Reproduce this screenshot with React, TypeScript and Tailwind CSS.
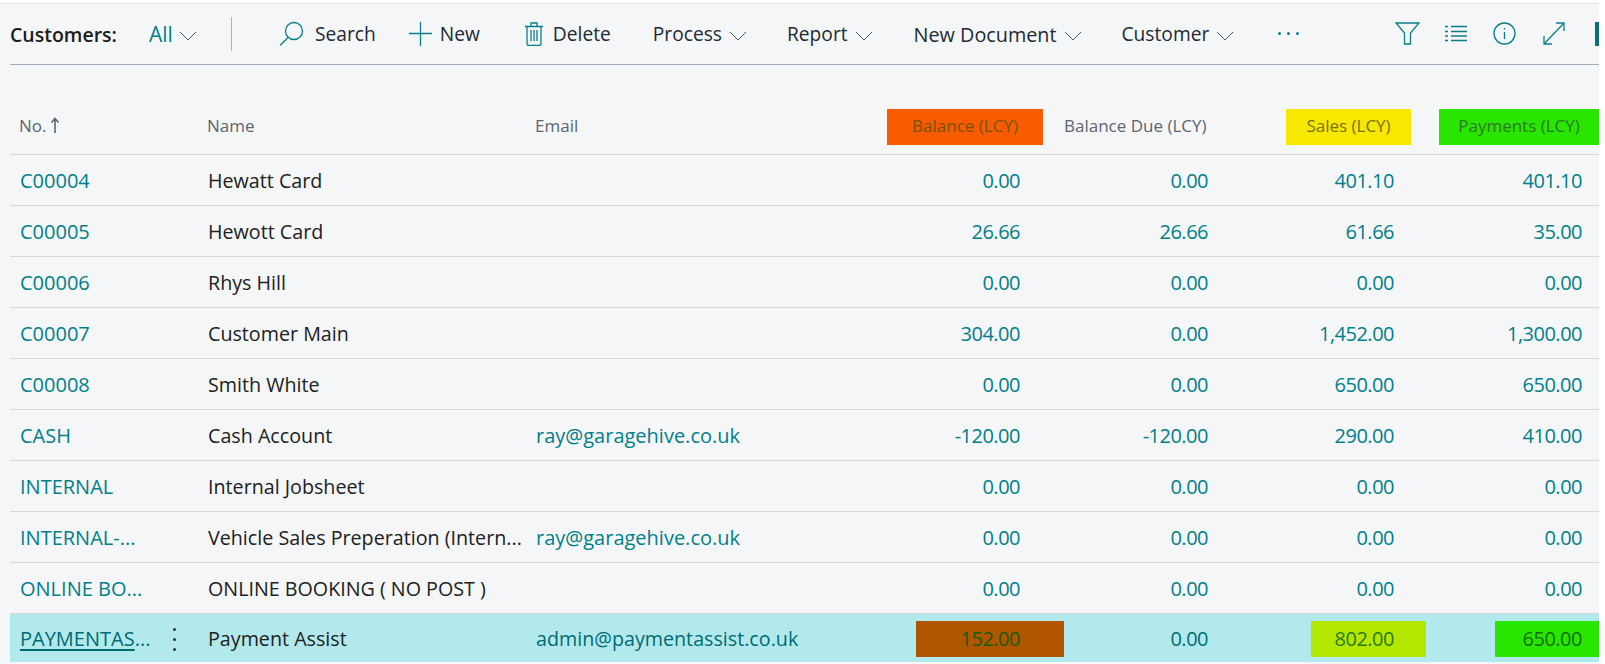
import React from 'react';

const rows = [
  { no: 'C00004', name: 'Hewatt Card', email: '', balance: '0.00', due: '0.00', sales: '401.10', payments: '401.10' },
  { no: 'C00005', name: 'Hewott Card', email: '', balance: '26.66', due: '26.66', sales: '61.66', payments: '35.00' },
  { no: 'C00006', name: 'Rhys Hill', email: '', balance: '0.00', due: '0.00', sales: '0.00', payments: '0.00' },
  { no: 'C00007', name: 'Customer Main', email: '', balance: '304.00', due: '0.00', sales: '1,452.00', payments: '1,300.00' },
  { no: 'C00008', name: 'Smith White', email: '', balance: '0.00', due: '0.00', sales: '650.00', payments: '650.00' },
  { no: 'CASH', name: 'Cash Account', email: 'ray@garagehive.co.uk', balance: '-120.00', due: '-120.00', sales: '290.00', payments: '410.00' },
  { no: 'INTERNAL', name: 'Internal Jobsheet', email: '', balance: '0.00', due: '0.00', sales: '0.00', payments: '0.00' },
  { no: 'INTERNAL-...', name: 'Vehicle Sales Preperation (Intern...', email: 'ray@garagehive.co.uk', balance: '0.00', due: '0.00', sales: '0.00', payments: '0.00' },
  { no: 'ONLINE BO...', name: 'ONLINE BOOKING ( NO POST )', email: '', balance: '0.00', due: '0.00', sales: '0.00', payments: '0.00' },
];

function Chevron({ className = '' }: { className?: string }) {
  return (
    <svg width="18" height="10" viewBox="0 0 18 10" fill="none" stroke="#4b5563" strokeWidth="1" className={className}>
      <path d="M1 1l8 8 8-8" />
    </svg>
  );
}

function Menu({ label, className = '' }: { label: string; className?: string }) {
  return (
    <div className={`flex items-center ${className}`}>
      <span>{label}</span>
      <Chevron className="ml-[7px] mt-[3px]" />
    </div>
  );
}

function Toolbar() {
  return (
    <div className="ml-2.5 flex h-[61px] items-center border-b border-[#a3abb4] pt-[1px] text-[19.2px] text-[#212a35]">
      <span className="w-[139px] text-[19.5px] font-semibold text-[#1c1c1c]">Customers:</span>
      <div className="flex w-[82px] items-center">
        <span className="text-[21px] font-medium text-[#00808a]">All</span>
        <Chevron className="ml-[6px] mt-[3px]" />
      </div>
      <div className="mb-[2px] h-[34px] w-px bg-[#a9b0b8]" />
      <svg width="25" height="25" viewBox="0 0 25 25" fill="none" stroke="#0b7f88" strokeWidth="1.3" className="mb-[2px] ml-[47px]">
        <circle cx="15" cy="10" r="8.5" />
        <path d="M9 16.5L1 24.5" />
      </svg>
      <span className="ml-[11px]">Search</span>
      <svg width="23" height="24" viewBox="0 0 23 24" fill="none" stroke="#0b7f88" strokeWidth="1.3" className="mb-[2px] ml-[33px]">
        <path d="M11.5 0v24M0 11.5h23" />
      </svg>
      <span className="ml-[8px]">New</span>
      <svg width="18" height="24" viewBox="0 0 18 24" fill="none" stroke="#0b7f88" strokeWidth="1.3" className="mb-[2px] ml-[45px]">
        <path d="M0 4.5h18M2 4.5v17a2 2 0 0 0 2 2h10a2 2 0 0 0 2-2v-17M6 4.5V1h6v3.5M6 8v11M9 8v11M12 8v11" />
      </svg>
      <span className="ml-[10px]">Delete</span>
      <Menu label="Process" className="ml-[42px]" />
      <Menu label="Report" className="ml-[40px]" />
      <Menu label="New Document" className="ml-[41px] text-[19.8px]" />
      <Menu label="Customer" className="ml-[40px]" />
      <div className="mb-[2px] ml-[44px] flex gap-[6px]">
        <span className="h-[3px] w-[3px] rounded-full bg-[#0b7f88]" />
        <span className="h-[3px] w-[3px] rounded-full bg-[#0b7f88]" />
        <span className="h-[3px] w-[3px] rounded-full bg-[#0b7f88]" />
      </div>
      <div className="mb-[2px] ml-auto flex items-center">
        <svg width="25" height="23" viewBox="0 0 25 23" fill="none" stroke="#0b7f88" strokeWidth="1.3">
          <path d="M1 1h23l-8.5 10v11h-6V11z" />
        </svg>
        <svg width="22" height="17" viewBox="0 0 22 17" fill="none" stroke="#0b7f88" strokeWidth="1.3" className="ml-[25px]">
          <path d="M6 1.5h16M6 6.5h16M6 11h16M6 15.5h16M0 1.5h3M0 6.5h3M0 11h3M0 15.5h3" />
        </svg>
        <svg width="23" height="23" viewBox="0 0 23 23" fill="none" stroke="#0b7f88" strokeWidth="1.3" className="ml-[26px]">
          <circle cx="11.5" cy="11.5" r="10.5" />
          <path d="M11.5 10v7M11.5 6v1.5" />
        </svg>
        <svg width="22" height="23" viewBox="0 0 22 23" fill="none" stroke="#0b7f88" strokeWidth="1.3" className="ml-[27px]">
          <path d="M1 22L21 1M13 1h8v8M1 14v8h8" />
        </svg>
        <div className="ml-[30px] h-[24px] w-[4px] bg-[#0b6f78]" />
      </div>
    </div>
  );
}

function HeaderRow() {
  return (
    <div className="ml-2.5 flex h-[90px] items-center whitespace-nowrap border-b border-[#d5d8dc] pt-[35px] text-[17px] text-[#5c6570]">
      <div className="mb-[2px] flex w-[188px] items-center pl-[9px]">
        No.
        <svg width="10" height="16" viewBox="0 0 10 16" fill="none" stroke="#5c6570" strokeWidth="1.6" className="mb-[3px] ml-[3px]">
          <path d="M5 16V2M1.5 5.5L5 1.5l3.5 4" />
        </svg>
      </div>
      <div className="mb-[2px] w-[332px] pl-[9px]">Name</div>
      <div className="mb-[2px] w-[350px] pl-[5px]">Email</div>
      <div className="flex w-[184px] justify-end pr-[21px]">
        <div className="flex h-[36px] w-[156px] items-center justify-center bg-[#f95b00] pb-[2px] text-[#7a5208]">Balance (LCY)</div>
      </div>
      <div className="mb-[2px] w-[160px] pr-[19px] text-right">Balance Due (LCY)</div>
      <div className="flex w-[202px] justify-end pr-[15px]">
        <div className="flex h-[36px] w-[125px] items-center justify-center bg-[#f8e800] pb-[2px] text-[#77720f]">Sales (LCY)</div>
      </div>
      <div className="flex w-[173px] justify-end">
        <div className="flex h-[36px] w-[160px] items-center justify-center bg-[#28e600] pb-[2px] text-[#2c7a22]">Payments (LCY)</div>
      </div>
    </div>
  );
}

function Row({ row }: { row: (typeof rows)[number] }) {
  return (
    <div className="ml-2.5 flex h-[51px] items-center border-b border-[#d5d8dc] pt-[2px] text-[20px] text-[#00808a]">
      <div className="w-[188px] pl-[10px]">{row.no}</div>
      <div className="w-[332px] whitespace-nowrap pl-[10px] text-[19.7px] text-[#212121]">{row.name}</div>
      <div className="w-[350px] pl-[6px]">{row.email}</div>
      <div className="w-[184px] pr-[44px] text-right tracking-[-0.5px]">{row.balance}</div>
      <div className="w-[160px] pr-[16px] text-right tracking-[-0.5px]">{row.due}</div>
      <div className="w-[202px] pr-[32px] text-right tracking-[-0.5px]">{row.sales}</div>
      <div className="w-[173px] pr-[17px] text-right tracking-[-0.5px]">{row.payments}</div>
    </div>
  );
}

function SelectedRow() {
  return (
    <div className="ml-2.5 flex h-[48px] items-center bg-[#b2e9ec] pt-[2px] text-[20px] text-[#006b74]">
      <div className="flex w-[188px] items-center pl-[10px]">
        <span className="underline decoration-2 underline-offset-[3px]">PAYMENTAS</span>...
        <div className="ml-[23px] flex flex-col gap-[7px]">
          <span className="h-[3px] w-[3px] rounded-full bg-[#333]" />
          <span className="h-[3px] w-[3px] rounded-full bg-[#333]" />
          <span className="h-[3px] w-[3px] rounded-full bg-[#333]" />
        </div>
      </div>
      <div className="w-[332px] pl-[10px] text-[19.7px] text-[#212121]">Payment Assist</div>
      <div className="w-[350px] pl-[6px] text-[19.7px]">admin@paymentassist.co.uk</div>
      <div className="flex w-[184px] justify-end tracking-[-0.5px]">
        <div className="flex h-[36px] items-center bg-[#b05500] pl-[45px] pr-[44px] text-[#1c5c10]">152.00</div>
      </div>
      <div className="w-[160px] pr-[16px] text-right tracking-[-0.5px]">0.00</div>
      <div className="flex w-[202px] justify-end tracking-[-0.5px]">
        <div className="flex h-[36px] items-center bg-[#b4e700] pl-[24px] pr-[32px] text-[#2c7a10]">802.00</div>
      </div>
      <div className="flex w-[173px] justify-end tracking-[-0.5px]">
        <div className="flex h-[36px] items-center bg-[#28e600] pl-[28px] pr-[17px] text-[#14700c]">650.00</div>
      </div>
    </div>
  );
}

export default function App() {
  return (
    <div className="h-[664px] overflow-hidden bg-white pt-[3px] font-['Open_Sans','Noto_Sans',sans-serif]">
      <div className="mr-[6px] h-[661px] border-t border-[#e4e6e8] bg-[#f5f6f8]">
        <Toolbar />
        <HeaderRow />
        {rows.map((row) => (
          <Row key={row.no} row={row} />
        ))}
        <SelectedRow />
      </div>
    </div>
  );
}
